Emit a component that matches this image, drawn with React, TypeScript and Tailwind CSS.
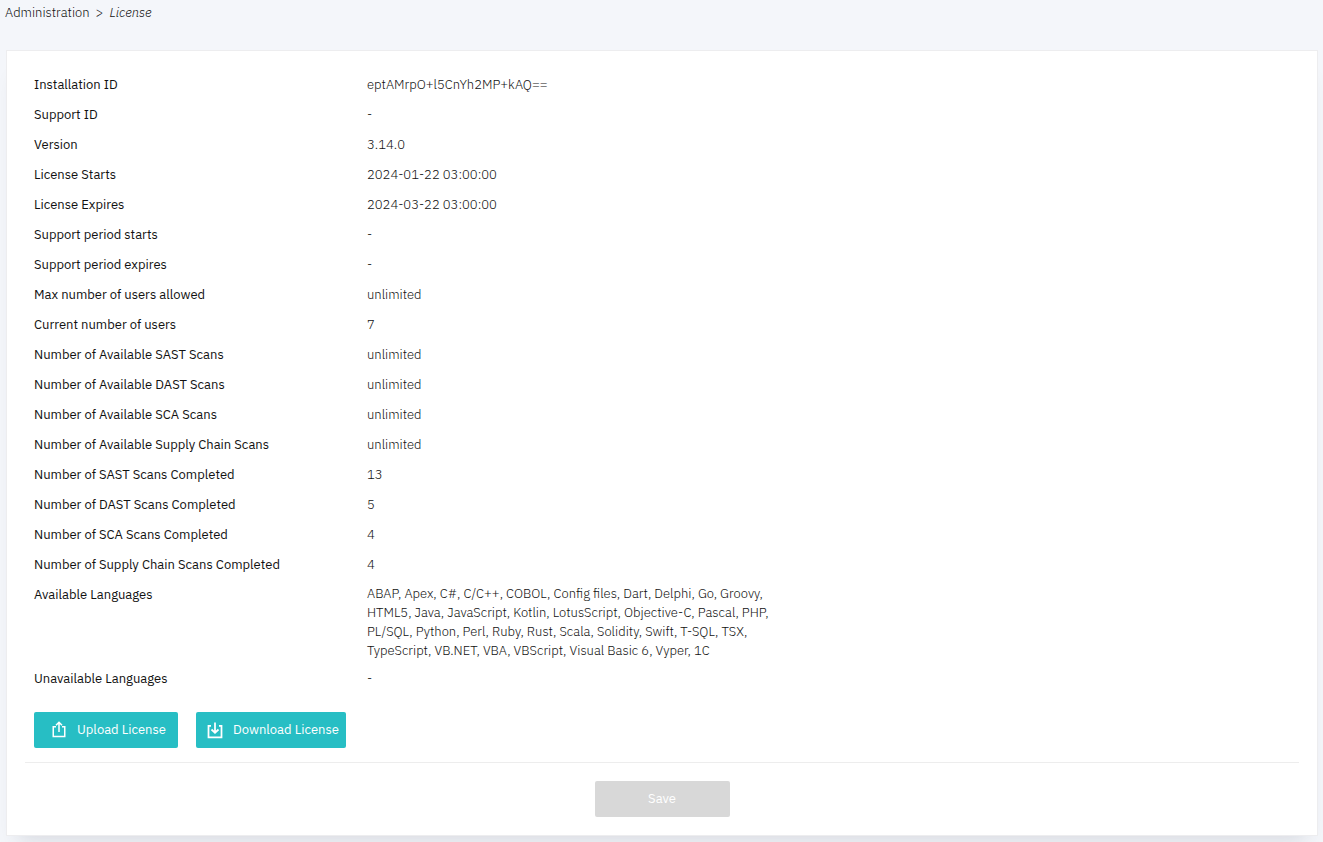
import type { ReactNode } from "react"

interface LicenseRow {
  label: string
  value: string
}

const licenseRows: LicenseRow[] = [
  { label: "Installation ID", value: "eptAMrpO+l5CnYh2MP+kAQ==" },
  { label: "Support ID", value: "-" },
  { label: "Version", value: "3.14.0" },
  { label: "License Starts", value: "2024-01-22 03:00:00" },
  { label: "License Expires", value: "2024-03-22 03:00:00" },
  { label: "Support period starts", value: "-" },
  { label: "Support period expires", value: "-" },
  { label: "Max number of users allowed", value: "unlimited" },
  { label: "Current number of users", value: "7" },
  { label: "Number of Available SAST Scans", value: "unlimited" },
  { label: "Number of Available DAST Scans", value: "unlimited" },
  { label: "Number of Available SCA Scans", value: "unlimited" },
  { label: "Number of Available Supply Chain Scans", value: "unlimited" },
  { label: "Number of SAST Scans Completed", value: "13" },
  { label: "Number of DAST Scans Completed", value: "5" },
  { label: "Number of SCA Scans Completed", value: "4" },
  { label: "Number of Supply Chain Scans Completed", value: "4" },
]

const languageLines = [
  "ABAP, Apex, C#, C/C++, COBOL, Config files, Dart, Delphi, Go, Groovy,",
  "HTML5, Java, JavaScript, Kotlin, LotusScript, Objective-C, Pascal, PHP,",
  "PL/SQL, Python, Perl, Ruby, Rust, Scala, Solidity, Swift, T-SQL, TSX,",
  "TypeScript, VB.NET, VBA, VBScript, Visual Basic 6, Vyper, 1C",
]

function UploadIcon() {
  return (
    <svg width="14" height="18" viewBox="0 0 14 18" fill="none" stroke="currentColor" strokeWidth="1.5" aria-hidden="true">
      <path d="M4 5.75H1.25v9.75h11.5V5.75H10" />
      <path d="M7 11V1.5M4 4.25 7 1.25l3 3" />
    </svg>
  )
}

function DownloadIcon() {
  return (
    <svg width="16" height="18" viewBox="0 0 16 18" fill="none" stroke="currentColor" strokeWidth="1.75" aria-hidden="true">
      <path d="M4 4.75H1.5v11.5h13V4.75H12" />
      <path d="M8 1.5v10M4.5 8.5 8 11.75l3.5-3.25" />
    </svg>
  )
}

function Row({ label, children }: { label: string; children: ReactNode }) {
  return (
    <div className="flex">
      <dt className="w-[333px] shrink-0 py-[5px] font-normal leading-5">{label}</dt>
      <dd className="py-[5px] leading-5">{children}</dd>
    </div>
  )
}

export default function App() {
  return (
    <div className="min-h-screen bg-[#f4f6fa] pb-1.5 font-['IBM_Plex_Sans',Roboto,sans-serif] text-[13px] font-light text-[#111111]">
      <nav aria-label="Breadcrumb" className="flex h-[50px] gap-1.5 px-[5px] pt-[3px] leading-5">
        <a href="#administration">Administration</a>
        <span>&gt;</span>
        <span className="italic" aria-current="page">License</span>
      </nav>

      <main className="ml-1.5 mr-[5px] border border-[#ededef] bg-white pt-[19px] pb-[18px] shadow-[0_16px_20px_-12px_rgba(50,55,75,0.15)]">
        <dl className="px-[27px]">
          {licenseRows.map((row) => (
            <Row key={row.label} label={row.label}>{row.value}</Row>
          ))}
          <div className="flex pb-1">
            <dt className="w-[333px] shrink-0 py-[5px] font-normal leading-5">Available Languages</dt>
            <dd className="pt-1 leading-[19px]">
              {languageLines.map((line) => (
                <span key={line} className="block">{line}</span>
              ))}
            </dd>
          </div>
          <Row label="Unavailable Languages">-</Row>
        </dl>

        <div className="flex gap-[18px] px-[27px] pt-[18px] pb-3.5 font-normal text-white">
          <button type="button" className="flex h-9 w-36 items-center gap-[11px] rounded-xs bg-[#27bec4] pl-[18px]">
            <UploadIcon />
            Upload License
          </button>
          <button type="button" className="flex h-9 w-[150px] items-center gap-2.5 rounded-xs bg-[#27bec4] pl-[11px]">
            <DownloadIcon />
            Download License
          </button>
        </div>

        <div className="mx-[18px] flex justify-center border-t border-[#ededed] pt-[18px]">
          <button type="button" disabled className="h-9 w-[135px] rounded-xs bg-[#d8d8d8] font-normal text-white">
            Save
          </button>
        </div>
      </main>
    </div>
  )
}
